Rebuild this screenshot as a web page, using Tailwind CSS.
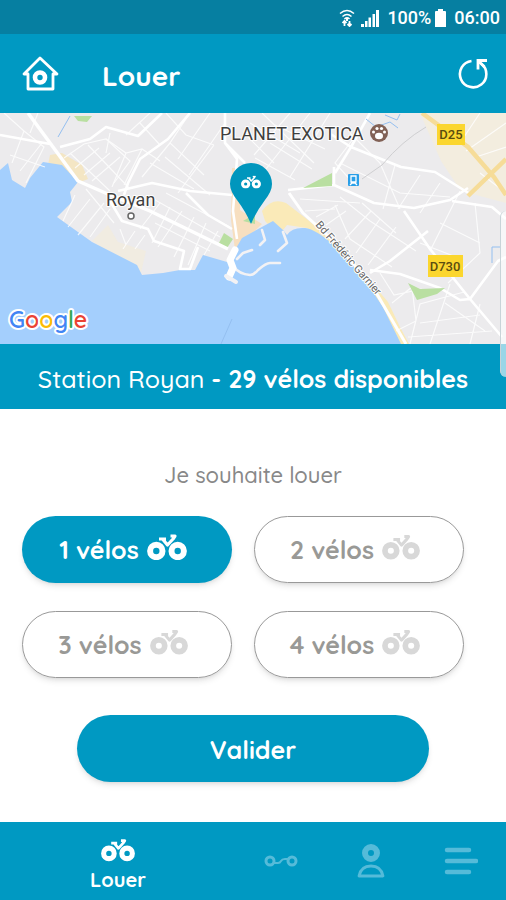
<!DOCTYPE html>
<html lang="fr">
<head>
  <meta charset="UTF-8">
  <meta name="viewport" content="width=device-width, initial-scale=1.0">
  <title>Louer</title>
  <script src="https://cdn.jsdelivr.net/npm/@tailwindcss/browser@4"></script>
</head>
<body class="bg-white min-h-screen flex flex-col font-['Quicksand','Lato',sans-serif]">

  <!-- shared bike glyph -->
  <svg class="hidden" aria-hidden="true">
    <symbol id="bike" viewBox="0 0 40 26">
      <g fill="none" stroke="currentColor">
        <circle cx="9.300" cy="17" r="6.200" stroke-width="6"/>
        <circle cx="30.700" cy="17" r="6.200" stroke-width="6"/>
        <path d="M12 5h7M15.500 5l5 6L26 5l2-3h-4.500" stroke-width="3.200" stroke-linejoin="round"/>
      </g>
    </symbol>
  </svg>

  <!-- status bar -->
  <div class="bg-[#067fa1] text-white h-[34px] flex items-center justify-end gap-1 pr-[6px] pt-[2px] font-[Roboto]">
    <svg class="w-4 h-[18px]" viewBox="0 0 16 18" fill="none" stroke="#fff" stroke-width="1.500">
      <path d="M1 4.500q7-6 14 0M3.500 7.500q4.500-4 9 0M5.500 10q2.500-2.500 5 0"/>
      <path d="M8 9v3" stroke-width="2"/>
      <path d="M5.500 17v-5M3.500 14l2-2.200 2 2.200M10.500 12v5M8.500 15l2 2 2-2" stroke-width="1.800"/>
    </svg>
    <svg class="w-[18px] h-[18px] ml-[2px]" viewBox="0 0 18 18" fill="#fff">
      <path d="M0 15h3v3H0zM4 12h2.500v6H4zM7.500 8.500H10V18H7.500zM11.500 5H14v13h-2.500zM15 1h3v17h-3z"/>
    </svg>
    <span class="text-lg ml-1 font-medium">100%</span>
    <svg class="w-[11px] h-[18px] mr-1" viewBox="0 0 11 18" fill="#fff">
      <path d="M3 0h5v2h2q1 0 1 1v15H0V3q0-1 1-1h2z"/>
    </svg>
    <span class="text-lg font-medium">06:00</span>
  </div>

  <!-- header -->
  <header class="bg-[#0099c2] text-white h-[79px] flex items-center px-[17px]">
    <button type="button" aria-label="Accueil" class="pl-1">
      <svg class="w-[38px] h-[38px]" viewBox="0 0 38 38" fill="none" stroke="#fff" stroke-width="2.800" stroke-linejoin="round">
        <path d="M19 3L3 19h4v15h25V19h4z"/>
        <circle cx="19" cy="22.500" r="5" stroke-width="4.600"/>
      </svg>
    </button>
    <h1 class="flex-1 pl-[43px] pt-1 text-[28px] font-bold">Louer</h1>
    <button type="button" aria-label="Actualiser">
      <svg class="w-8 h-8" viewBox="0 0 32 32" fill="none" stroke="#fff" stroke-width="2.600">
        <path d="M14.500 3A13.200 13.200 0 1 0 24 5.500"/>
        <path d="M30 2.500h-9v9M21.500 3l6 6" stroke-width="2.800"/>
      </svg>
    </button>
  </header>

  <!-- map -->
  <div class="relative">
    <svg class="block w-full" viewBox="0 0 506 231" role="img" aria-label="Carte de Royan">
      <rect width="506" height="231" fill="#ecebed"/>
      <path d="M420 0h86v90l-45-12-20-30z" fill="#f3eddf"/>
      <!-- beaches -->
      <path d="M50 42l12-2 20 12 6 14-10 4-30-18z" fill="#f4e6c4"/>
      <path d="M92 128l16-16 10 17 28 9-5 22z" fill="#f1ece1"/>
      <path d="M232 55h10l-2 42 22 14-27 26-4-30z" fill="#f7dfc0"/>
      <path d="M262 98q10-14 24-8l22 17 40 35 40 47 12 25 9 17h-12l-17-37-23-34-24-26-26-19-20-3-8 10-14-14z" fill="#faeab8"/>
      <!-- sea -->
      <path d="M0 57L8 50L12 67L25 75L30 65L43 49L62 52L78 69L70 79L72 89L57 104L92 129L137 152L142 162L163 160L180 157H195L203 142L227 149L235 137L242 125L260 115L273 108L283 117L287 122Q292 114 305 115Q316 116 336 134L360 160L383 194L401 231H0z" fill="#a4cffd"/>
      <!-- parks -->
      <g fill="#b9dfa1">
        <path d="M74 3h18l-5 6-9-1z"/>
        <path d="M224 120l9 6-6 9-8-5z"/>
        <path d="M243 108l12-7v10z"/>
      </g>
      <!-- minor streets -->
      <g fill="none" stroke="#fff" stroke-width="1.200" opacity=".8">
        <path d="M4 0l20 18-12 32M24 18l20 16-18 36M10 42l35 12M38 0l-8 20M42 30L20 58"/>
        <path d="M64 45l20-14 22-5 24 22-16 22M75 55l24-20M84 62l26-22M92 68l28-24M70 40l40 38M88 32l42 44"/>
        <path d="M106 26l20 14 16-4 18 12M126 40l-14 34M142 36l-18 36M110 20l-4 20M140 10l20 22M150 0l-24 22M166 0l20 22 28 10M190 0l-20 30 34 32M210 0l-32 46M225 10l-36 52M170 30l-28 34M150 50l44 26M165 44l45 38M214 32l-36 48"/>
        <path d="M75 82l-12 26M90 86l-22 28M104 90l-26 32M86 76l28 34M110 96l-20 28"/>
        <path d="M120 116l6 16M135 118l-12 18M145 122l-10 14M160 90l-20 26M170 94l-18 36M182 98l-24 36M194 104l-20 40M206 110l-18 42M218 118l-14 24M150 84l70 40M166 80l64 34M155 110l55 28"/>
        <path d="M250 10l50 30M262 0l52 50M290 0l-36 42M310 0l-44 56M330 0l-40 64M275 12l50 24M270 30l42 26M255 45l40 22M244 20l30 30"/>
        <path d="M300 86l60 4M305 98l30-2M316 104l22-12M326 112l20-14M335 92l15 34 42 28M345 126l26-28M356 140l24-34M368 152l28-38M340 84l30 24 46 30M362 90l34 30"/>
        <path d="M350 20l30 30M365 10l-30 40 20 22M380 50l20 46M395 52l-12 44M420 62l-22 34M440 70l-20 30M340 50l60 30 50 4"/>
        <path d="M460 78l-30 60M475 90l5 50-32 30M440 110l40 20M420 130l36 14M480 0l-20 30M506 10l-40 28M506 34l-30 10M480 60l26 20"/>
        <path d="M380 160l14 22 28-6M392 190l20-16 4 34-20 10M410 231l10-40 44-12M430 231l20-60M420 210l60-8M408 224l84-6M445 190l40 28M470 231l10-40"/>
      </g>
      <!-- main streets -->
      <g fill="none" stroke="#fff" stroke-width="2.600" stroke-linejoin="round">
        <path d="M28 0l50 68 32 14 40 16 78 38" stroke-width="3.500"/>
        <path d="M0 22l50 9M60 34l30-8 16-12 32 9 24-23M190 0l-22 26-28 20-12 24-4 12"/>
        <path d="M118 78l34-8 38 8 42 4M186 80l22 22 24 14M110 88l12 20 26 8 6 12 30 10-4 18h10l8-22"/>
        <path d="M225 0v30l12 16-4 52 4 28M225 30l20 20"/>
        <path d="M288 77l46-5 40 18 40 5 36-8 18-12M335 60l16-26 50 20 34 5 35 22M351 34L370 0M334 72v-18M351 34l-22-14"/>
        <path d="M289 80l14 20 35 32 36 44 32 55" stroke-width="3"/>
        <path d="M404 98l26 38 40 50 32 38M370 157l30 4 40 14 20 12 10-1 28-38 8-4M428 118l-38 30-20 12M506 106l-14-12-40-6"/>
      </g>
      <path d="M303 75l29-15v13zM408 170l12 6 25-1-8 6-20 6z" fill="#b9dfa1"/>
      <!-- harbour -->
      <g fill="none" stroke="#f3f2f4" stroke-width="2.600" stroke-linecap="round" stroke-linejoin="round">
        <path d="M262 117l3 10-5 5M283 119l4 11-9 8M237 146l6-6 9-3M234 154q5 7 16 8 4 0 8-5 8-7 12-7h10"/>
        <path d="M235 137l-5 10 3 8-4 9" stroke="#fff" stroke-width="7"/>
        <path d="M226 163l10 6" stroke-width="4"/>
      </g>
      <!-- departmental roads -->
      <g fill="none" stroke="#f6dc98" stroke-width="4.500">
        <path d="M422 0l46 34 26 30 12 18M468 83l38-37"/>
      </g>
      <path d="M426 14q-24 14-44 38l-20 14" fill="none" stroke="#cfcfd1"/>
      <path d="M70 3L58 24M366 6l10 8 14-5 8 6M385 2l12 5 3-6M492 150v-16h8M232 206l-11 25" fill="none" stroke="#94bff0"/>
      <!-- labels -->
      <g font-family="Roboto, sans-serif" fill="#3f3f3f" stroke="#fff" stroke-width="2" stroke-linejoin="round" paint-order="stroke">
        <text x="220" y="27" font-size="18">PLANET EXOTICA</text>
        <text x="106" y="93" font-size="18">Royan</text>
        <text x="315" y="112" font-size="11" fill="#666" transform="rotate(49 315 112)">Bd Frédéric Garnier</text>
      </g>
      <circle cx="131" cy="103" r="3" fill="#fff" stroke="#666" stroke-width="1.500"/>
      <g font-family="Roboto, sans-serif" font-size="13" font-weight="500" fill="#5a4d10" text-anchor="middle">
        <rect x="437" y="11" width="28" height="21" fill="#fbd62e"/>
        <text x="451" y="26">D25</text>
        <rect x="428" y="142" width="35" height="22" fill="#fbd62e"/>
        <text x="445" y="158">D730</text>
      </g>
      <!-- zoo and station markers -->
      <circle cx="379" cy="20" r="9" fill="#816156"/>
      <g fill="#fff">
        <ellipse cx="379" cy="23" rx="4" ry="3.200"/>
        <circle cx="373.500" cy="19" r="1.500"/><circle cx="377" cy="15.500" r="1.600"/><circle cx="381.500" cy="15.500" r="1.600"/><circle cx="384.500" cy="19" r="1.500"/>
      </g>
      <rect x="348" y="61" width="11" height="12" rx="1" fill="#2a9fe8"/>
      <path d="M351 63h5v6h-5zM350 72l2-2h3l2 2" fill="none" stroke="#fff" stroke-width="1.300"/>
      <!-- pin -->
      <path d="M251 111q-5-12-14-24-7-9-7-16a21 21 0 0 1 42 0q0 7-7 16-9 12-14 24z" fill="#0096bd"/>
      <svg x="241" y="62" width="20" height="14" viewBox="0 0 40 26" color="#fff"><use href="#bike"/></svg>
      <text x="9" y="215" font-family="Quicksand, Lato, sans-serif" font-size="23" font-weight="600" stroke="#fff" stroke-width="4" stroke-linejoin="round" paint-order="stroke"><tspan fill="#4285f4">G</tspan><tspan fill="#ea4335">o</tspan><tspan fill="#fbbc05">o</tspan><tspan fill="#4285f4">g</tspan><tspan fill="#34a853">l</tspan><tspan fill="#ea4335">e</tspan></text>
    </svg>
    <!-- edge panel handle -->
    <div class="absolute right-0 top-[98px] w-[6px] h-[166px] rounded-l-md bg-white/60 border-l border-[#c8d4d8]"></div>
  </div>

  <p class="bg-[#0099c2] text-white h-[65px] pt-1 flex items-center justify-center text-[25px] font-medium whitespace-pre">Station Royan <b>- 29 vélos disponibles</b></p>

  <main class="flex-1 pt-[50px]">
    <h2 class="text-center text-[22px] font-medium text-[#888] leading-8">Je souhaite louer</h2>
    <div class="grid grid-cols-2 gap-x-[22px] gap-y-7 pl-[22px] pr-[42px] pt-[25px]">
      <button type="button" aria-pressed="true" class="h-[67px] rounded-full bg-[#0099c2] text-white text-[25px] font-bold flex items-center justify-center gap-2 pr-2 shadow-md">1 vélos <svg class="w-10 h-[26px] mb-[6px]"><use href="#bike"/></svg></button>
      <button type="button" aria-pressed="false" class="h-[67px] rounded-full border border-[#999] text-[#999996] text-[25px] font-bold flex items-center justify-center gap-2 pr-2 shadow-md">2 vélos <svg class="w-[38px] h-[26px] mb-[6px] text-[#d8d8d8]"><use href="#bike"/></svg></button>
      <button type="button" aria-pressed="false" class="h-[67px] rounded-full border border-[#999] text-[#999996] text-[25px] font-bold flex items-center justify-center gap-2 pr-2 shadow-md">3 vélos <svg class="w-[38px] h-[26px] mb-[6px] text-[#d8d8d8]"><use href="#bike"/></svg></button>
      <button type="button" aria-pressed="false" class="h-[67px] rounded-full border border-[#999] text-[#999996] text-[25px] font-bold flex items-center justify-center gap-2 pr-2 shadow-md">4 vélos <svg class="w-[38px] h-[26px] mb-[6px] text-[#d8d8d8]"><use href="#bike"/></svg></button>
    </div>
    <div class="px-[77px] pt-[37px] pb-10">
      <button type="button" class="w-full h-[67px] pt-[2px] rounded-full bg-[#0099c2] text-white text-[25px] font-bold shadow-md">Valider</button>
    </div>
  </main>

  <!-- bottom navigation -->
  <nav class="bg-[#0099c2] h-[78px] flex text-white">
    <a href="#louer" aria-current="page" class="flex-1 flex flex-col items-center pt-4 text-xl leading-6 font-bold">
      <svg class="w-[34px] h-6 mb-[6px]"><use href="#bike"/></svg>
      Louer
    </a>
    <a href="#trajets" aria-label="Trajets" class="w-[90px] flex items-center justify-center text-[#55bbd9]">
      <svg class="w-[34px] h-[14px]" viewBox="0 0 34 14" fill="none" stroke="currentColor" stroke-width="3">
        <circle cx="6" cy="7" r="4"/><circle cx="28" cy="7" r="4"/>
        <path d="M10 9h4q2 0 3-2t4-2h3" stroke-width="2"/>
      </svg>
    </a>
    <a href="#compte" aria-label="Compte" class="w-[90px] flex items-center justify-center text-[#55bbd9]">
      <svg class="w-7 h-9" viewBox="0 0 28 36" fill="none" stroke="currentColor">
        <circle cx="14" cy="10" r="6" stroke-width="6"/>
        <path d="M2 33q2-10 12-10t12 10z" stroke-width="2.800" stroke-linejoin="round"/>
      </svg>
    </a>
    <a href="#menu" aria-label="Menu" class="w-[90px] flex items-center justify-center text-[#55bbd9]">
      <svg class="w-[34px] h-7" viewBox="0 0 34 28" stroke="currentColor" stroke-width="4.500" stroke-linecap="round">
        <path d="M3 3h22M3 14h29M3 25h22"/>
      </svg>
    </a>
  </nav>
</body>
</html>
